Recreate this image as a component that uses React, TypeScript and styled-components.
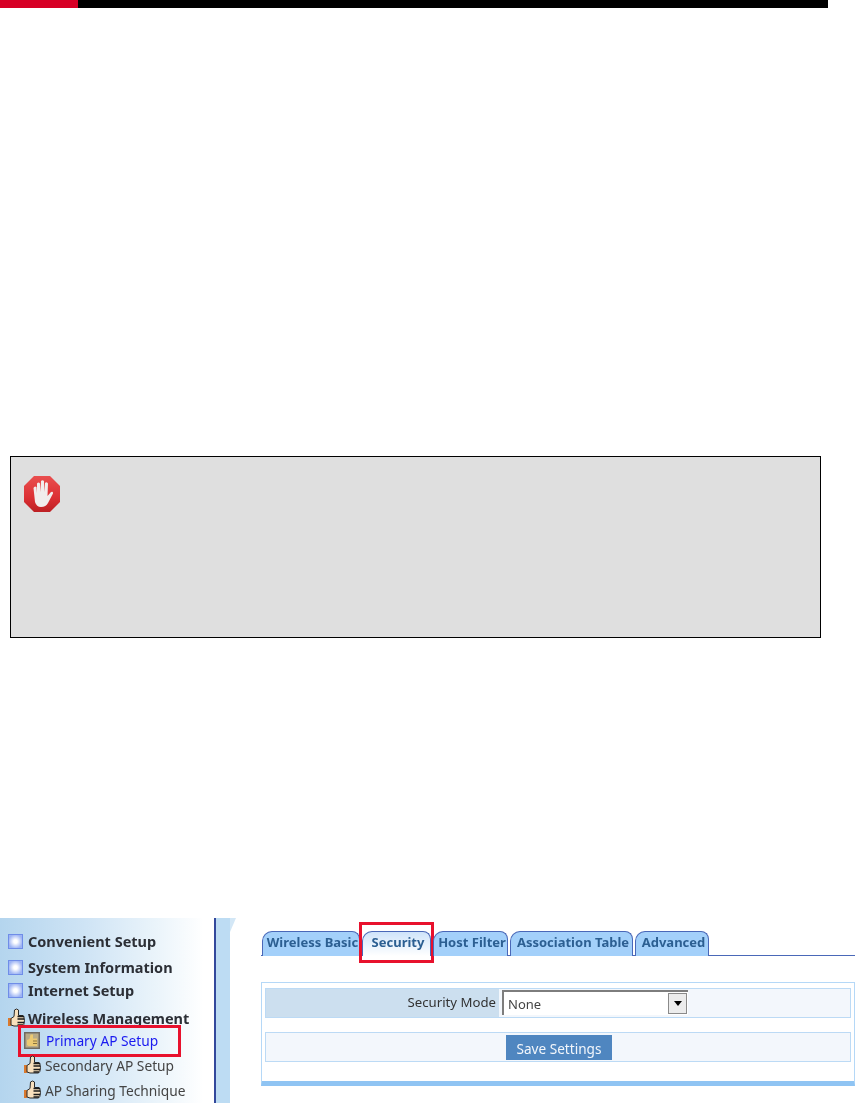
import React, { FC } from "react"
import styled, { createGlobalStyle } from "styled-components"

const GlobalStyle = createGlobalStyle`
  html, body {
    margin: 0;
    padding: 0;
    background: #fff;
  }
`

const Page = styled.div`
  width: 862px;
  height: 1103px;
  overflow: hidden;
  display: flex;
  flex-direction: column;
`

const TopBar = styled.div`
  width: 828px;
  height: 8px;
  background: #000;
  flex: none;
`

const TopBarAccent = styled.div`
  width: 78px;
  height: 100%;
  background: #d70026;
`

const Notice = styled.div`
  flex: none;
  box-sizing: border-box;
  width: 811px;
  height: 182px;
  margin: 448px 0 0 10px;
  padding: 18px 0 0 12px;
  background: #dfdfdf;
  border: 1px solid #000;
`

const StopIcon = styled.div`
  width: 38px;
  height: 38px;
  filter: blur(0.4px);
`

const Shot = styled.div`
  flex: none;
  height: 185px;
  margin-top: 280px;
  display: flex;
  filter: blur(0.35px);
  font-family: "Noto Sans", "Open Sans", sans-serif;
`

const Sidebar = styled.nav`
  flex: none;
  box-sizing: border-box;
  width: 214px;
  padding-top: 12px;
  background: linear-gradient(90deg, #b4d5ee 0%, #cfe4f5 40%, #ecf5fb 75%, #ffffff 95%);
`

const NavRow = styled.div<{ $gap: number; $indent?: boolean }>`
  position: relative;
  display: flex;
  align-items: center;
  height: 22px;
  margin-top: ${(p) => p.$gap}px;
  padding-left: ${(p) => (p.$indent ? 24 : 8)}px;
`

const IconSlot = styled.span`
  flex: none;
  display: flex;
  align-items: center;
  width: 17px;
`

const NavLabel = styled.span<{ $variant: "main" | "sub" | "active" }>`
  white-space: nowrap;
  font-size: ${(p) => (p.$variant === "main" ? 14.5 : 13.75)}px;
  font-weight: ${(p) => (p.$variant === "main" ? 700 : 400)};
  color: ${(p) => (p.$variant === "active" ? "#1a1af0" : p.$variant === "sub" ? "#444" : "#2c2f36")};
  margin-left: ${(p) => (p.$variant === "active" ? 5 : p.$variant === "sub" ? 4 : 3)}px;
`

const ActiveMark = styled.div`
  position: absolute;
  left: 18px;
  top: -4px;
  width: 163px;
  height: 32px;
  box-sizing: border-box;
  border: 3px solid #e8112d;
  pointer-events: none;
`

const SideStrip = styled.div`
  position: relative;
  flex: none;
  width: 14px;
  border-left: 2px solid #33489c;
  background: #bddcf3;
  &::after {
    content: "";
    position: absolute;
    left: 100%;
    top: 0;
    border-top: 14px solid #d3e7f6;
    border-right: 6px solid transparent;
  }
`

const Content = styled.main`
  flex: 1;
  padding: 12px 7px 0 31px;
  min-width: 0;
`

const TabRow = styled.div`
  display: flex;
  align-items: flex-end;
  height: 25px;
  padding-left: 1px;
  gap: 2px;
  border-bottom: 1px solid #4a68b8;
`

const Tab = styled.div<{ $active?: boolean; $width: number }>`
  position: relative;
  box-sizing: border-box;
  width: ${(p) => p.$width}px;
  height: 25px;
  margin-bottom: -1px;
  padding-left: 3px;
  border: 1px solid #4a68b8;
  border-bottom: none;
  border-radius: 10px 8px 0 0;
  background: ${(p) => (p.$active ? "linear-gradient(#cfe4fa, #ffffff)" : "#a3d0fa")};
  color: #2c5f92;
  font-size: 13px;
  font-weight: 700;
  line-height: 20px;
  text-align: center;
  white-space: nowrap;
`

const TabMark = styled.div`
  position: absolute;
  left: -4px;
  top: -10px;
  right: -4px;
  bottom: -7px;
  border: 3px solid #e8112d;
  pointer-events: none;
`

const Panel = styled.section`
  box-sizing: border-box;
  height: 104px;
  margin-top: 26px;
  padding: 5px 3px 0;
  border: 1px solid #b5d8f7;
  border-bottom: 5px solid #8fc4f3;
`

const FormRow = styled.div<{ $spaced?: boolean }>`
  box-sizing: border-box;
  display: flex;
  height: 30px;
  margin-top: ${(p) => (p.$spaced ? 14 : 0)}px;
  border: 1px solid #bcdaf5;
  background: #f3f7fc;
`

const LabelCell = styled.div`
  box-sizing: border-box;
  flex: none;
  width: 233px;
  padding-right: 3px;
  background: #ccdfef;
  color: #333;
  font-size: 13.2px;
  line-height: 27px;
  text-align: right;
  white-space: nowrap;
`

const FakeSelect = styled.div`
  box-sizing: border-box;
  display: flex;
  align-items: center;
  justify-content: space-between;
  width: 186px;
  height: 25px;
  margin: 1px 0 0 3px;
  padding: 0 1px 0 4px;
  background: #fff;
  border-top: 2px solid #7d7d7d;
  border-left: 2px solid #7d7d7d;
  color: #444;
  font-size: 13px;
`

const SelectArrow = styled.div`
  box-sizing: border-box;
  display: flex;
  align-items: center;
  justify-content: center;
  width: 19px;
  height: 21px;
  border: 1px solid #8a8a8a;
  background: #ececec;
  &::after {
    content: "";
    border: 4px solid transparent;
    border-top: 5px solid #000;
    border-bottom: none;
  }
`

const SaveButton = styled.div`
  box-sizing: border-box;
  width: 106px;
  height: 25px;
  margin: 2px 0 0 240px;
  background: #4f86c0;
  color: #f2f6fb;
  font-size: 13.6px;
  line-height: 27px;
  text-align: center;
  white-space: nowrap;
`

const Bullet: FC = () => (
  <svg width="15" height="15" viewBox="0 0 15 15">
    <defs>
      <radialGradient id="bulletGlow">
        <stop offset="0.25" stopColor="#ffffff" />
        <stop offset="1" stopColor="#9db4f4" />
      </radialGradient>
    </defs>
    <rect x="0.5" y="0.5" width="14" height="14" fill="url(#bulletGlow)" stroke="#6f8de8" />
  </svg>
)

const Thumb: FC = () => (
  <svg width="17" height="20" viewBox="0 0 17 20">
    <rect x="0" y="10" width="3" height="8" fill="#d9792e" />
    <path
      d="M3 10.500 L6 8.500 L6.500 2 Q8.500 0 10.500 2 L10.500 7.500 L15 7.500 Q16.500 8.500 16 10.500 Q17 13 16 14.500 Q16.500 16.500 14.500 18 L6 18 L3 17 Z"
      fill="#f8e0bd"
      stroke="#2a2a2a"
      strokeWidth="1"
    />
    <path d="M9.500 8.500 H16 M9.500 11 H16.500 M9.500 14.500 H16.500 M9.500 17 H15" stroke="#1c1c1c" strokeWidth="1.5" />
  </svg>
)

const ThumbPage: FC = () => (
  <svg width="16" height="17" viewBox="0 0 16 17">
    <rect x="0" y="0" width="16" height="17" fill="#6f6a62" />
    <rect x="1.500" y="1.500" width="13" height="14" fill="#b9ab87" />
    <path
      d="M3 8 L5.500 7 L6.500 2.500 L9 2.500 L9 6.500 L13 6.500 L13 14 L4.500 14 L3 13 Z"
      fill="#ecca72"
    />
    <path d="M9 9 H13 M9 11.500 H13" stroke="#8a7440" strokeWidth="1" />
  </svg>
)

const StopSign: FC = () => (
  <svg width="38" height="38" viewBox="0 0 38 38">
    <defs>
      <linearGradient id="stopFill" x1="0" y1="0" x2="0" y2="1">
        <stop offset="0" stopColor="#e94f4f" />
        <stop offset="0.6" stopColor="#dc3034" />
        <stop offset="1" stopColor="#bd2024" />
      </linearGradient>
    </defs>
    <path d="M11 1 H27 L37 11 V27 L27 37 H11 L1 27 V11 Z" fill="url(#stopFill)" />
    <path
      d="M12 27 L10.500 13 Q11.500 10.500 13.500 12 L14 18 L14 8.500 Q15.500 6.500 17 8.500 L17.500 17 L18 6 Q19.500 4.500 21 6 L21 17 L22 8 Q23.500 6.500 25 8.500 L24.500 21 L28 17 Q30.500 16 30 18.500 L25 28 Q23 32 18 32 Q13.500 32 12 27 Z"
      fill="#f1eded"
    />
  </svg>
)

const tabs = [
  { label: "Wireless Basic", width: 98 },
  { label: "Security", width: 69, active: true },
  { label: "Host Filter", width: 75 },
  { label: "Association Table", width: 123 },
  { label: "Advanced", width: 74 },
]

const App: FC = () => (
  <Page>
    <GlobalStyle />
    <TopBar>
      <TopBarAccent />
    </TopBar>
    <Notice>
      <StopIcon>
        <StopSign />
      </StopIcon>
    </Notice>
    <Shot>
      <Sidebar>
        <NavRow $gap={0}>
          <IconSlot><Bullet /></IconSlot>
          <NavLabel $variant="main">Convenient Setup</NavLabel>
        </NavRow>
        <NavRow $gap={4}>
          <IconSlot><Bullet /></IconSlot>
          <NavLabel $variant="main">System Information</NavLabel>
        </NavRow>
        <NavRow $gap={1}>
          <IconSlot><Bullet /></IconSlot>
          <NavLabel $variant="main">Internet Setup</NavLabel>
        </NavRow>
        <NavRow $gap={6}>
          <IconSlot><Thumb /></IconSlot>
          <NavLabel $variant="main">Wireless Management</NavLabel>
        </NavRow>
        <NavRow $gap={0} $indent>
          <IconSlot><ThumbPage /></IconSlot>
          <NavLabel $variant="active">Primary AP Setup</NavLabel>
          <ActiveMark />
        </NavRow>
        <NavRow $gap={3} $indent>
          <IconSlot><Thumb /></IconSlot>
          <NavLabel $variant="sub">Secondary AP Setup</NavLabel>
        </NavRow>
        <NavRow $gap={3} $indent>
          <IconSlot><Thumb /></IconSlot>
          <NavLabel $variant="sub">AP Sharing Technique</NavLabel>
        </NavRow>
      </Sidebar>
      <SideStrip />
      <Content>
        <TabRow>
          {tabs.map((tab) => (
            <Tab key={tab.label} $width={tab.width} $active={tab.active}>
              {tab.label}
              {tab.active && <TabMark />}
            </Tab>
          ))}
        </TabRow>
        <Panel>
          <FormRow>
            <LabelCell>Security Mode</LabelCell>
            <FakeSelect>
              None
              <SelectArrow />
            </FakeSelect>
          </FormRow>
          <FormRow $spaced>
            <SaveButton>Save Settings</SaveButton>
          </FormRow>
        </Panel>
      </Content>
    </Shot>
  </Page>
)

export default App
